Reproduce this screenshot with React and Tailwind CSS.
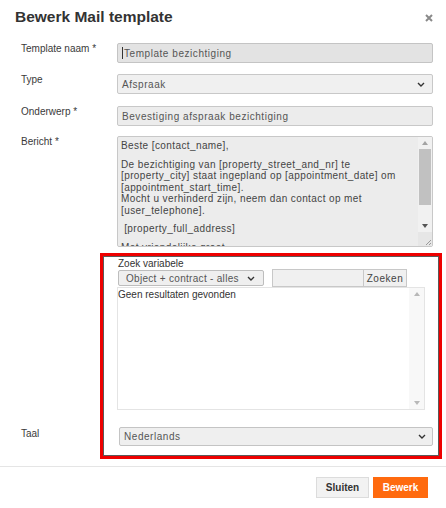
const Chevron = () => (
  <svg width="8" height="5" viewBox="0 0 8 5" className="shrink-0">
    <path d="M1 1l3 3 3-3" fill="none" stroke="#333" strokeWidth="1.4" />
  </svg>
);

const Arrow = ({ up, color = '#777' }) => (
  <svg width="6" height="4" viewBox="0 0 6 4">
    <path d={up ? 'M0 4L3 0L6 4Z' : 'M0 0L6 0L3 4Z'} fill={color} />
  </svg>
);

const Label = ({ children }) => (
  <div className="text-[10px] leading-[11px] text-[#3a3a3a]">{children}</div>
);

const messageLines = [
  'Beste [contact_name],',
  '',
  'De bezichtiging van [property_street_and_nr] te',
  '[property_city] staat ingepland op [appointment_date] om',
  '[appointment_start_time].',
  'Mocht u verhinderd zijn, neem dan contact op met',
  '[user_telephone].',
  '',
  '\u00a0[property_full_address]',
  '',
  'Met vriendelijke groet,',
];

const App = () => {
  return (
    <div className="relative w-[446px] h-[508px] bg-white overflow-hidden font-['Liberation_Sans',Arial,sans-serif] text-[#333]">
      {/* header */}
      <div className="flex items-start justify-between pl-[15px] pr-[13px] pt-[8px]">
        <h2 className="text-[15.5px] leading-[18px] font-bold text-[#333]">Bewerk Mail template</h2>
        <svg width="8" height="8" viewBox="0 0 8 8" className="mt-[6px]">
          <path d="M1 1l6 6M7 1l-6 6" stroke="#8a8a8a" strokeWidth="2" />
        </svg>
      </div>

      {/* form */}
      <div className="grid grid-cols-[96px_316px] pl-[21px] mt-[17px]">
        <Label>Template naam *</Label>
        <div className="h-[20px] flex items-center px-[4px] bg-[#e3e3e3] border border-[#c4c4c4] rounded-[2px] text-[10px] tracking-[0.55px] text-[#555]">
          <span className="w-px h-[12px] bg-[#333] mr-px" />
          Template bezichtiging
        </div>

        <div className="col-span-2 h-[11px]" />
        <Label>Type</Label>
        <div className="h-[20px] flex items-center justify-between px-[4px] pr-[7px] bg-[#f0f0f0] border border-[#c8c8c8] rounded-[2px] text-[10px] tracking-[0.55px] text-[#555]">
          Afspraak
          <Chevron />
        </div>

        <div className="col-span-2 h-[12px]" />
        <Label>Onderwerp *</Label>
        <div className="h-[20px] flex items-center px-[4px] bg-[#ececec] border border-[#c8c8c8] rounded-[2px] text-[10px] tracking-[0.55px] text-[#555]">
          Bevestiging afspraak bezichtiging
        </div>

        <div className="col-span-2 h-[10px]" />
        <Label>Bericht *</Label>
        <div className="h-[111px] flex bg-[#ececec] border border-[#c8c8c8] rounded-[2px] overflow-hidden">
          <div className="flex-1 pl-[3px] pt-[3px] text-[10px] leading-[11.5px] tracking-[0.4px] text-[#444]">
            {messageLines.map((line, i) =>
              line === '' ? (
                <div key={i} className="h-[7px]" />
              ) : (
                <div key={i} className="whitespace-pre">{line}</div>
              )
            )}
          </div>
          <div className="w-[14px] flex flex-col items-center bg-[#f1f1f1]">
            <div className="h-[12px] flex items-center"><Arrow up color="#a3a3a3" /></div>
            <div className="w-[12px] h-[56px] bg-[#c1c1c1]" />
            <div className="flex-1" />
            <div className="h-[12px] flex items-center"><Arrow color="#555" /></div>
            <div className="w-[14px] h-[14px] bg-[#e6e6e6] flex items-end justify-end">
              <svg width="8" height="8" viewBox="0 0 8 8">
                <path d="M7 2L2 7M7 5L5 7" stroke="#999" strokeWidth="1" />
              </svg>
            </div>
          </div>
        </div>

        {/* variable search */}
        <div />
        <div className="mt-[11px]">
          <div className="text-[10px] leading-[11px] text-[#333] pl-px">Zoek variabele</div>
          <div className="flex items-center h-[18px]">
            <div className="ml-px w-[146px] h-[16px] flex items-center justify-between pl-[7px] pr-[8px] bg-[#efefef] border border-[#bdbdbd] rounded-[2px] text-[10px] tracking-[0.3px] text-[#555]">
              Object + contract - alles
              <Chevron />
            </div>
            <div className="ml-[8px] w-[92px] h-[18px] bg-[#f0f0f0] border border-[#c8c8c8]" />
            <div className="w-[43px] h-[18px] flex items-center justify-center bg-[#f0f0f0] border border-l-0 border-[#c8c8c8] text-[10px] tracking-[0.55px] text-[#444]">
              Zoeken
            </div>
          </div>
          <div className="w-[308px] h-[123px] flex border border-[#e4e4e4] bg-white">
            <div className="flex-1 text-[10px] leading-[11px] text-[#333] pt-px">Geen resultaten gevonden</div>
            <div className="w-[15px] flex flex-col items-center justify-between py-[4px] bg-[#f8f8f8]">
              <Arrow up color="#b8b8b8" />
              <Arrow color="#b8b8b8" />
            </div>
          </div>
        </div>

        <div className="col-span-2 h-[17px]" />
        <div className="pt-px"><Label>Taal</Label></div>
        <div className="ml-[2px] h-[19px] flex items-center justify-between pl-[4px] pr-[6px] bg-[#efefef] border border-[#c4c4c4] rounded-[2px] text-[10px] tracking-[0.55px] text-[#555]">
          Nederlands
          <Chevron />
        </div>
      </div>

      {/* footer */}
      <div className="mt-[20px] border-t border-[#e5e5e5] flex justify-end gap-[4px] pt-[10px] pr-[18px]">
        <button className="w-[53px] h-[21px] bg-[#f2f2f2] border border-[#dcdcdc] text-[10px] font-bold text-[#333]">
          Sluiten
        </button>
        <button className="w-[55px] h-[21px] bg-[#ff6a0e] border border-[#ff6a0e] text-[10px] font-bold text-white">
          Bewerk
        </button>
      </div>

      {/* red annotation frame */}
      <div className="absolute left-[100px] top-[253px] w-[342px] h-[206px] border-[3px] border-[#ee0000] shadow-[inset_0_0_0_1px_#5a5a5a] pointer-events-none" />
    </div>
  );
};

export default App;
